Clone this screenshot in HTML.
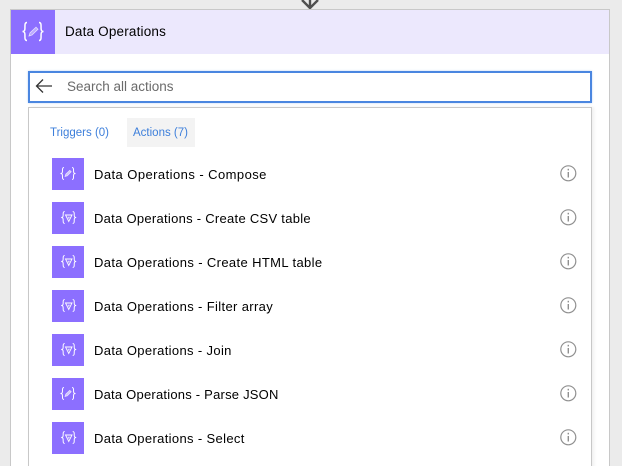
<!DOCTYPE html>
<html><head><meta charset="utf-8">
<style>
html,body{margin:0;padding:0;width:622px;height:466px;overflow:hidden}
body{background:#ebebeb;position:relative;font-family:"Liberation Sans",sans-serif;color:#000}
div,svg{position:absolute;box-sizing:border-box}
.wrap{left:0;top:0;width:622px;height:466px;overflow:hidden;background:#ebebeb}
.card{left:10px;top:9px;width:600px;height:470px;background:#fff;border:1px solid #c8c8c8}
.hdr{left:11px;top:10px;width:598px;height:44px;background:#ece8fd}
.hi{left:11px;top:10px;width:44px;height:44px;background:#8c6fff}
.ht{left:65px;top:24px;font-size:13.5px;line-height:16px;white-space:nowrap;letter-spacing:.18px}
.search{left:28px;top:71px;width:564px;height:32px;background:#fff;border:2px solid #4a86e0;box-shadow:0 0 2px #b9d2f5}
.st{left:67px;top:79px;font-size:13.5px;line-height:16px;color:#6b6b6b;white-space:nowrap}
.panel{left:28px;top:107px;width:564px;height:370px;background:#fff;border:1.5px solid #c8c8c8;box-shadow:2px 0 3px #f0f0f0}
.tab{font-size:11.5px;line-height:14px;color:#3d7fdb;white-space:nowrap;top:126px}
.tabbg{left:127px;top:118px;width:68px;height:29px;background:#f3f3f3}
.ri{left:52px;width:32px;height:32px;background:#8c6fff}
.rt{left:94px;font-size:13px;line-height:16px;white-space:nowrap;letter-spacing:.36px}
</style></head><body>
<div class="wrap">
<svg style="left:299px;top:0" width="22" height="10" viewBox="0 0 22 10"><path d="M11 0V7M3 0L11 8L19 0" fill="none" stroke="#505050" stroke-width="2.4"/></svg>
<div class="card"></div>
<div class="hdr"></div>
<div class="hi"></div>
<svg style="left:11px;top:10px" width="44" height="44" viewBox="0 0 44 44" fill="none" stroke="#fff"><path d="M16 12.500C12.500 12.500 14.800 18.500 13.500 20.500C13 21.200 12 21.500 11.500 21.500C12 21.500 13 21.800 13.500 22.500C14.800 24.500 12.500 30.500 16 30.500M28 12.500C31.500 12.500 29.200 18.500 30.500 20.500C31 21.200 32 21.500 32.500 21.500C32 21.500 31 21.800 30.500 22.500C29.200 24.500 31.500 30.500 28 30.500" stroke-width="1.500"/><path d="M18 26L19 22.800L25 17.200L27 19.200L21 25Z" fill="#fff" fill-opacity=".4" stroke-width=".8" stroke-opacity=".7"/></svg>
<div class="ht">Data Operations</div>
<div class="search"></div>
<svg style="left:34px;top:78px" width="20" height="16" viewBox="0 0 20 16" fill="none" stroke="#333" stroke-width="1.300"><path d="M18 8H2.500M9 1.500L2.500 8L9 14.500"/></svg>
<div class="st">Search all actions</div>
<div class="panel"></div>
<div class="tabbg"></div>
<div class="tab" style="left:50px">Triggers (0)</div>
<div class="tab" style="left:133px">Actions (7)</div>

<div class="ri" style="top:158px"></div><svg style="left:52px;top:158px" width="32" height="32"><use href="#p"/></svg>
<div class="rt" style="top:167px;letter-spacing:.44px">Data Operations - Compose</div>
<div class="ri" style="top:202px"></div><svg style="left:52px;top:202px" width="32" height="32"><use href="#f"/></svg>
<div class="rt" style="top:211px;letter-spacing:.28px">Data Operations - Create CSV table</div>
<div class="ri" style="top:246px"></div><svg style="left:52px;top:246px" width="32" height="32"><use href="#f"/></svg>
<div class="rt" style="top:255px;letter-spacing:.37px">Data Operations - Create HTML table</div>
<div class="ri" style="top:290px"></div><svg style="left:52px;top:290px" width="32" height="32"><use href="#f"/></svg>
<div class="rt" style="top:299px">Data Operations - Filter array</div>
<div class="ri" style="top:334px"></div><svg style="left:52px;top:334px" width="32" height="32"><use href="#f"/></svg>
<div class="rt" style="top:343px;letter-spacing:.35px">Data Operations - Join</div>
<div class="ri" style="top:378px"></div><svg style="left:52px;top:378px" width="32" height="32"><use href="#p"/></svg>
<div class="rt" style="top:387px;letter-spacing:.22px">Data Operations - Parse JSON</div>
<div class="ri" style="top:422px"></div><svg style="left:52px;top:422px" width="32" height="32"><use href="#f"/></svg>
<div class="rt" style="top:431px;letter-spacing:.35px">Data Operations - Select</div>

<svg style="left:559px;top:164px" width="18" height="18"><use href="#i"/></svg>
<svg style="left:559px;top:208px" width="18" height="18"><use href="#i"/></svg>
<svg style="left:559px;top:252px" width="18" height="18"><use href="#i"/></svg>
<svg style="left:559px;top:296px" width="18" height="18"><use href="#i"/></svg>
<svg style="left:559px;top:340px" width="18" height="18"><use href="#i"/></svg>
<svg style="left:559px;top:384px" width="18" height="18"><use href="#i"/></svg>
<svg style="left:559px;top:428px" width="18" height="18"><use href="#i"/></svg>

<svg width="0" height="0" style="left:0;top:0">
<defs>
<g id="b" fill="none" stroke="#fff" stroke-width="1"><path d="M12 9.500C9.500 9.500 11 13.500 10.200 14.700C9.900 15.200 9.200 15.500 8.500 15.500C9.200 15.500 9.900 15.800 10.200 16.300C11 17.500 9.500 21.500 12 21.500M20 9.500C22.500 9.500 21 13.500 21.800 14.700C22.100 15.200 22.800 15.500 23.500 15.500C22.800 15.500 22.100 15.800 21.800 16.300C21 17.500 22.500 21.500 20 21.500"/></g>
<g id="p"><use href="#b"/><path d="M13 18.500L13.800 16L17.800 12.300L19.300 13.800L15.300 17.800Z" fill="#fff" fill-opacity=".6" stroke="#fff" stroke-width=".6" stroke-opacity=".8"/></g>
<g id="f"><g transform="translate(.7 0)"><use href="#b"/></g><path d="M13.500 13H20L16.750 19.500Z" fill="none" stroke="#fff" stroke-width=".9"/><path d="M15.500 14.800H18L16.750 17.300Z" fill="#fff" fill-opacity=".7"/></g>
<g id="i" fill="none" stroke="#909090"><circle cx="9.300" cy="9.300" r="7.500" stroke-width="1.200"/><path d="M9.300 8V13.500" stroke-width="1.400"/><path d="M9.300 4.800V6.400" stroke-width="1.400"/></g>
</defs>
</svg>
</div>
</body></html>
